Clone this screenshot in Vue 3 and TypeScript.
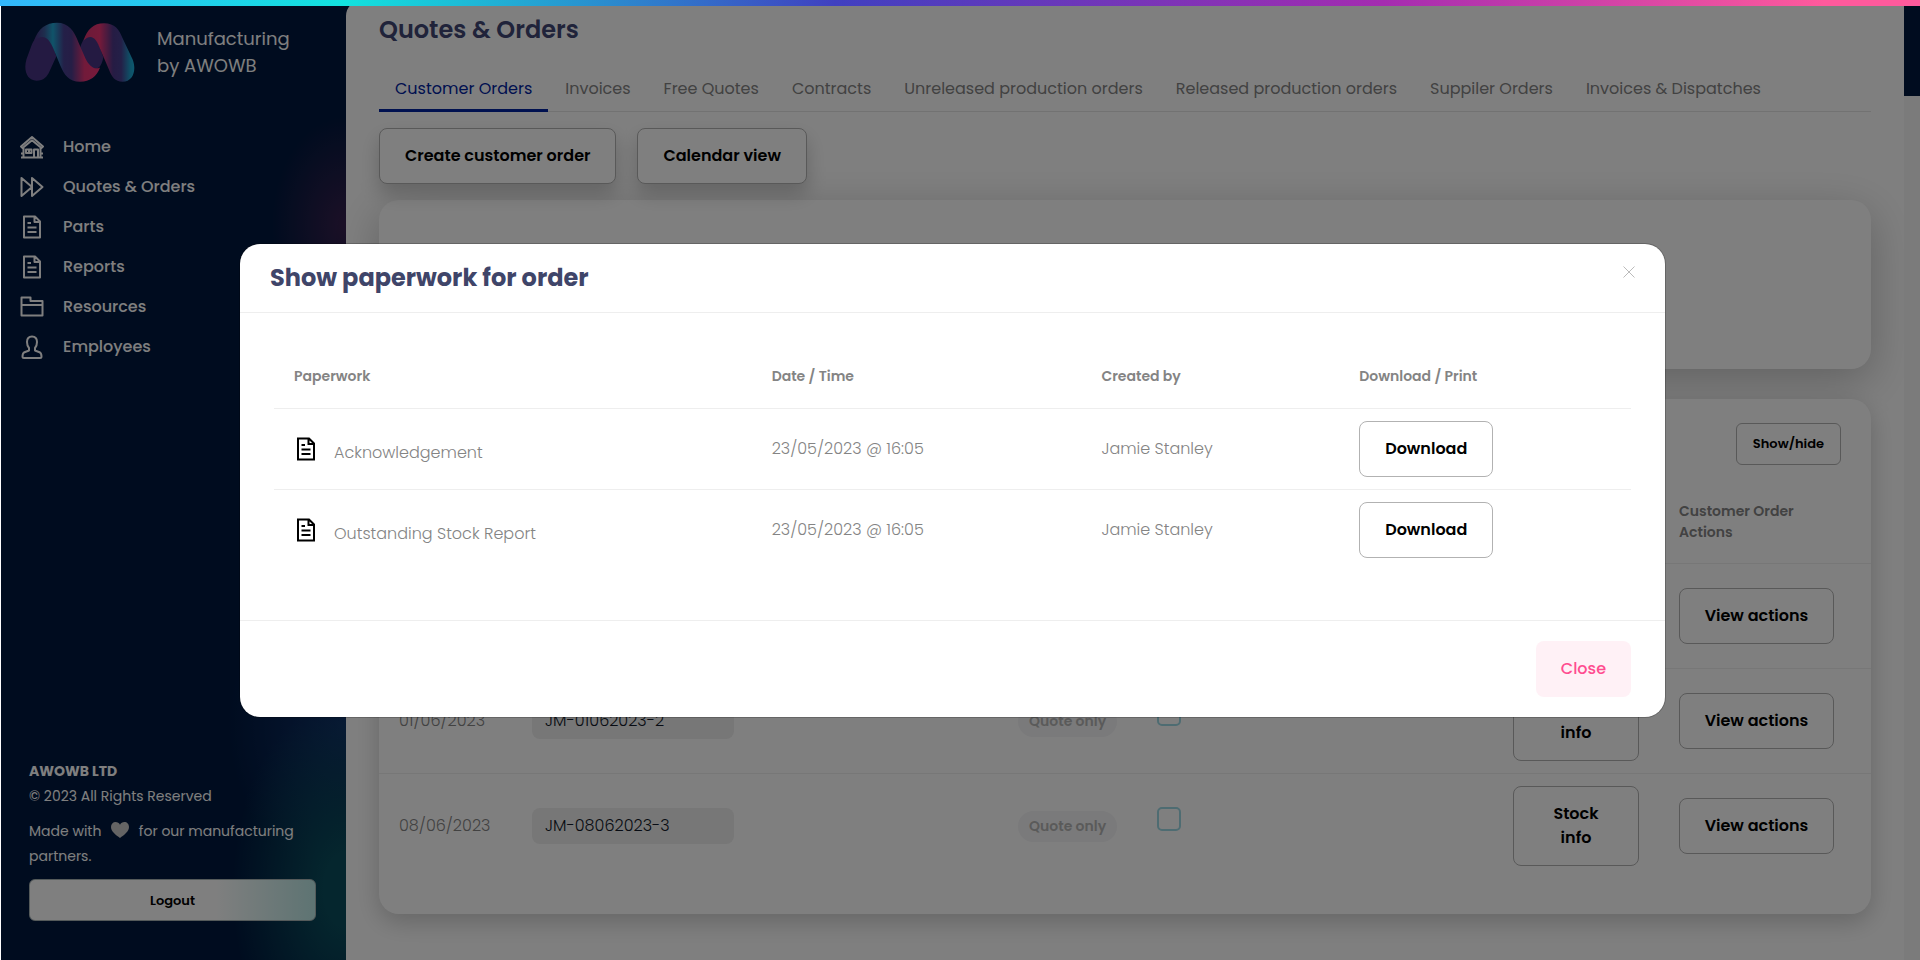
<script setup lang="ts">
import { ref } from 'vue'

type IconName = 'home' | 'forward' | 'document' | 'folder' | 'person'

interface NavItem { label: string; icon: IconName }
interface OrderRow { date: string; reference: string; status: string; actions: string }
interface Paperwork { name: string; created: string; author: string }

const navItems: NavItem[] = [
  { label: 'Home', icon: 'home' },
  { label: 'Quotes & Orders', icon: 'forward' },
  { label: 'Parts', icon: 'document' },
  { label: 'Reports', icon: 'document' },
  { label: 'Resources', icon: 'folder' },
  { label: 'Employees', icon: 'person' },
]

const iconPaths: Record<IconName, string> = {
  home: 'M1 11.5 12 2l11 9.5-1.6 1.6L12 5.2l-9.4 7.9zM3.5 13v9M20.500 13v9M1 18.500h3M20 18.500h3M1 22.500h22M6 14.500h5.500v3.500H6zM14 22v-7.500h4V22M9 14.500V18',
  forward: 'M1.500 3v18l10.500-9zM12 3v18l10.500-9z',
  document: 'M4 1.500h11l5 5v16H4zM14.500 2v5H20M7.500 8h3.500M7.500 12.500h9M7.500 17h9',
  folder: 'M1.500 20.500v-18h9v3.500h12v14.500zM1.500 10h21',
  person: 'M12 1.500c-3.600 0-5 2.300-5 5.500 0 2.300.8 4.600 2 6v2.500l-4.500 1.700c-1.500.7-2 2.300-2 4.300 0 1 .5 1.500 1.500 1.500h16c1 0 1.500-.5 1.500-1.500 0-2-.5-3.600-2-4.300L15 15.500V13c1.200-1.400 2-3.700 2-6 0-3.200-1.400-5.500-5-5.500z',
}

const tabs: string[] = [
  'Customer Orders', 'Invoices', 'Free Quotes', 'Contracts', 'Unreleased production orders',
  'Released production orders', 'Suppiler Orders', 'Invoices & Dispatches',
]
const activeTab = ref(tabs[0])

const orders: OrderRow[] = [
  { date: '', reference: '', status: '', actions: 'View actions' },
  { date: '01/06/2023', reference: 'JM-01062023-2', status: 'Quote only', actions: 'View actions' },
  { date: '08/06/2023', reference: 'JM-08062023-3', status: 'Quote only', actions: 'View actions' },
]

const paperwork: Paperwork[] = [
  { name: 'Acknowledgement', created: '23/05/2023 @ 16:05', author: 'Jamie Stanley' },
  { name: 'Outstanding Stock Report', created: '23/05/2023 @ 16:05', author: 'Jamie Stanley' },
]

const modalOpen = ref(true)
</script>

<template>
  <div class="app">
    <div class="rainbow"></div>

    <aside class="sidebar">
      <div class="brand">
        <svg class="logo" viewBox="74 66 331 181" aria-hidden="true">
          <defs>
            <linearGradient id="waveOne" gradientUnits="userSpaceOnUse" x1="105" y1="0" x2="300" y2="0">
              <stop offset="0" stop-color="#483484" />
              <stop offset=".14" stop-color="#3c5c9c" />
              <stop offset=".27" stop-color="#20a8d4" />
              <stop offset=".44" stop-color="#484090" />
              <stop offset=".56" stop-color="#4c3c8c" />
              <stop offset=".76" stop-color="#e43474" />
              <stop offset="1" stop-color="#f03478" />
            </linearGradient>
            <linearGradient id="waveTwo" gradientUnits="userSpaceOnUse" x1="250" y1="0" x2="404" y2="0">
              <stop offset="0" stop-color="#d83470" />
              <stop offset=".32" stop-color="#e83474" />
              <stop offset=".58" stop-color="#4c3888" />
              <stop offset=".74" stop-color="#484090" />
              <stop offset=".92" stop-color="#1ca4d0" />
              <stop offset="1" stop-color="#1cb4e0" />
            </linearGradient>
          </defs>
          <path fill="#483484" d="M128 107C110 107 100 120 94 135L78 178C68 212 80 243 108 243C130 243 140 232 148 214L168 170C160 140 150 107 128 107Z" />
          <path fill="#483484" d="M240 143C250 112 262 104 274 108C294 116 300 145 310 172C306 192 300 207 283 207C262 204 250 170 240 143Z" />
          <path fill="url(#waveOne)" d="M100 124C114 84 138 68 170 68C205 68 222 92 235 128L256 176C268 200 283 211 300 203C290 230 270 246 240 246C205 246 192 225 180 197L160 148C148 118 130 96 100 124Z" />
          <path fill="url(#waveTwo)" d="M250 122C262 88 280 70 312 70C345 70 358 90 368 115L398 178C411 210 400 246 368 246C345 246 335 230 328 212L300 147C290 118 275 98 250 122Z" />
        </svg>
        <p class="brand-name">Manufacturing<br />by AWOWB</p>
      </div>

      <nav class="nav">
        <a v-for="item in navItems" :key="item.label" class="nav-link" href="#">
          <svg class="nav-icon" viewBox="0 0 24 24" aria-hidden="true"><path :d="iconPaths[item.icon]" /></svg>
          <span>{{ item.label }}</span>
        </a>
      </nav>

      <footer class="side-footer">
        <strong>AWOWB LTD</strong>
        <p>© 2023 All Rights Reserved</p>
        <p class="made">
          Made with
          <svg class="heart" viewBox="0 0 18 16" aria-hidden="true"><path d="M9 16C5 13 0 9.500 0 5C0 2 2 0 4.600 0C6.500 0 8.200 1 9 2.800C9.800 1 11.500 0 13.400 0C16 0 18 2 18 5C18 9.500 13 13 9 16Z" /></svg>
          for our manufacturing<br />partners.
        </p>
        <button class="logout" type="button">Logout</button>
      </footer>
    </aside>

    <div class="content-wrap">
      <main class="content">
        <h1>Quotes &amp; Orders</h1>
        <div class="tabs" role="tablist">
          <button v-for="tab in tabs" :key="tab" class="tab" :class="{ active: tab === activeTab }" type="button" role="tab" :aria-selected="tab === activeTab" @click="activeTab = tab">{{ tab }}</button>
        </div>
        <div class="actions">
          <button class="btn raised" type="button">Create customer order</button>
          <button class="btn raised" type="button">Calendar view</button>
        </div>

        <section class="card summary"></section>

        <section class="card orders">
          <div class="toolbar"><button class="btn small" type="button">Show/hide</button></div>
          <table class="orders-table">
            <colgroup>
              <col class="c-date" /><col /><col class="c-status" /><col class="c-check" /><col class="c-stock" /><col class="c-actions" />
            </colgroup>
            <thead>
              <tr><th></th><th></th><th></th><th></th><th></th><th class="wrap" scope="col">Customer Order Actions</th></tr>
            </thead>
            <tbody>
              <tr v-for="(order, i) in orders" :key="i">
                <td>{{ order.date }}</td>
                <td><span v-if="order.reference" class="reference">{{ order.reference }}</span></td>
                <td><span v-if="order.status" class="pill">{{ order.status }}</span></td>
                <td><input v-if="order.reference" class="check" type="checkbox" :aria-label="order.reference" /></td>
                <td><button v-if="order.reference" class="btn block" type="button">Stock info</button></td>
                <td><button class="btn view" type="button">{{ order.actions }}</button></td>
              </tr>
            </tbody>
          </table>
        </section>
      </main>
    </div>
    <div class="scroll-track"><div class="scroll-thumb"></div></div>

    <div v-if="modalOpen" class="overlay">
      <section class="modal" role="dialog" aria-modal="true" aria-labelledby="modal-title">
        <header class="modal-head">
          <h2 id="modal-title">Show paperwork for order</h2>
          <button class="dismiss" type="button" aria-label="Dismiss" @click="modalOpen = false">
            <svg viewBox="0 0 12 12" aria-hidden="true"><path d="M.5.5l11 11M11.500.5l-11 11" /></svg>
          </button>
        </header>
        <div class="modal-body">
          <table class="paper-table">
            <colgroup><col class="p-name" /><col class="p-date" /><col class="p-author" /><col /></colgroup>
            <thead>
              <tr><th scope="col">Paperwork</th><th scope="col">Date / Time</th><th scope="col">Created by</th><th scope="col">Download / Print</th></tr>
            </thead>
            <tbody>
              <tr v-for="paper in paperwork" :key="paper.name">
                <td>
                  <div class="paper-name">
                    <svg viewBox="0 0 24 24" aria-hidden="true"><path :d="iconPaths.document" /></svg>
                    <span>{{ paper.name }}</span>
                  </div>
                </td>
                <td>{{ paper.created }}</td>
                <td>{{ paper.author }}</td>
                <td><button class="btn download" type="button">Download</button></td>
              </tr>
            </tbody>
          </table>
        </div>
        <footer class="modal-foot"><button class="close" type="button" @click="modalOpen = false">Close</button></footer>
      </section>
    </div>
  </div>
</template>

<style>
body { margin: 0; background: #fff; }
</style>

<style scoped>
* { box-sizing: border-box; }
.app {
  position: relative;
  display: flex;
  min-height: 100vh;
  padding-left: 1px;
  font-family: Poppins, Inter, "Noto Sans", sans-serif;
  font-size: 16px;
  line-height: 24px;
  color: #848484;
}
h1, h2, p { margin: 0; }
button { font: inherit; cursor: pointer; }
.rainbow {
  position: absolute;
  inset: 0 0 auto 0;
  z-index: 3;
  height: 6px;
  background: linear-gradient(90deg, #33b7fb 0%, #12e2de 18%, #4040c0 43.500%, #a42cb0 72%, #ff5a9c 95%);
}

.sidebar {
  display: flex;
  flex: 0 0 345px;
  flex-direction: column;
  padding: 22px 30px 39px 14px;
  color: #fff;
  background:
    radial-gradient(ellipse 75px 110px at 100% 225px, #38204e, transparent),
    radial-gradient(ellipse 115px 190px at 100% 890px, #0a4c5c 20%, transparent),
    radial-gradient(ellipse 120px 150px at 100% 725px, #103068, transparent),
    #00183e;
}
.brand { display: flex; align-items: center; gap: 22px; padding-left: 10px; }
.logo { width: 110px; height: 60px; }
.brand-name { font-size: 18px; line-height: 27px; }
.nav { display: flex; flex-direction: column; margin-top: 45px; }
.nav-link { display: flex; align-items: center; gap: 19px; height: 40px; padding-left: 5px; font-weight: 500; color: #fff; text-decoration: none; }
.nav-icon { width: 24px; height: 24px; fill: none; stroke: #fff; stroke-width: 2; stroke-linejoin: round; }
.side-footer { display: flex; flex-direction: column; margin-top: auto; padding-left: 14px; font-size: 14px; line-height: 25px; }
.side-footer strong { font-weight: 700; }
.made { margin-top: 10px; }
.heart { width: 18px; height: 16px; margin: 0 6px; vertical-align: -2px; fill: #c8c8c8; }
.logout {
  height: 42px;
  margin-top: 10px;
  border: 1px solid #a8b4b4;
  border-radius: 6px;
  font-size: 13px;
  font-weight: 600;
  color: #000;
  background: linear-gradient(90deg, #fff 65%, #bce8e6);
}

.content-wrap { flex: 1; min-width: 0; background: #00183e; }
.content { min-height: 100%; padding: 12px 33px 46px; border-top-left-radius: 16px; background: #fff; }
h1 { font-size: 24px; font-weight: 600; line-height: 36px; color: #404674; }
.tabs { display: flex; gap: 1px; margin-top: 17px; border-bottom: 1px solid #e4e4e4; }
.tab { height: 47px; margin-bottom: -1px; padding: 3px 16px 0; border: 0; border-bottom: 3px solid transparent; background: none; color: #848484; white-space: nowrap; }
.tab.active { color: #0022a0; border-color: #0022a0; }
.actions { display: flex; gap: 21px; margin-top: 16px; }
.btn { height: 56px; padding: 0 25px; border: 1px solid #b2b2b2; border-radius: 8px; background: #fff; color: #000; font-weight: 600; white-space: nowrap; }
.btn.raised { box-shadow: 0 10px 20px rgba(0, 0, 0, .2); }
.btn.small { height: 42px; padding: 0 16px; font-size: 13px; border-radius: 6px; }
.btn.block { display: block; width: 100%; height: 80px; white-space: normal; }
.btn.view { display: block; width: 155px; padding: 0; }
.btn.download { display: block; width: 134px; padding: 0; }
.card { border-radius: 20px; background: #fff; }
.summary { height: 169px; margin-top: 16px; box-shadow: 0 12px 45px rgba(0, 0, 0, .24); }
.orders { position: relative; margin-top: 30px; padding: 24px 0 36px; box-shadow: 0 8px 24px rgba(0, 0, 0, .2); }
.toolbar { display: flex; justify-content: flex-end; padding-right: 30px; }
table { width: 100%; border-collapse: separate; border-spacing: 0; table-layout: fixed; }
th, td { padding: 0 20px; text-align: left; border-bottom: 1px solid #eee; }
th { font-size: 14px; font-weight: 600; line-height: 21px; }
th.wrap { padding-right: 50px; }
td { font-weight: 300; }
tbody tr:last-child td { border-bottom: 0; }
.orders-table { margin-top: 15px; }
.orders-table th { height: 84px; }
.orders-table td { height: 105px; }
.orders-table tbody tr:last-child td { height: 104px; }
.c-date { width: 133px; }
.c-status { width: 139px; }
.c-check { width: 356px; }
.c-stock { width: 166px; }
.c-actions { width: 212px; }
.reference { display: block; width: 202px; padding: 6px 13px; border-radius: 8px; background: #eee; color: #101828; }
.pill { display: block; width: max-content; padding: 3px 11px; border-radius: 16px; background: #f4f4f6; color: #b4b4b4; font-size: 14px; line-height: 25px; font-weight: 600; white-space: nowrap; }
.check { display: block; appearance: none; width: 24px; height: 24px; margin: 0 0 14px; border: 2px solid #9cd8e4; border-radius: 5px; background: #fff; }

.scroll-track { flex: 0 0 16px; background: #f6f6f6; }
.scroll-thumb { height: 96px; background: #00183e; }

.overlay {
  position: absolute;
  inset: 0 0 0 1px;
  z-index: 2;
  display: flex;
  align-items: center;
  padding: 20px 255px 20px 239px;
  background: rgba(0, 0, 0, .5);
}
.modal { flex: 1; border-radius: 20px; background: #fff; box-shadow: 0 0 0 1px rgba(0, 0, 0, .2); }
.modal-head { display: flex; align-items: center; justify-content: space-between; height: 69px; padding: 0 30px; border-bottom: 1px solid #eee; }
h2 { font-size: 24px; line-height: 36px; font-weight: 700; color: #3f4569; }
.dismiss { align-self: flex-start; width: 12px; height: 12px; margin-top: 22px; padding: 0; border: 0; background: none; }
.dismiss svg { display: block; stroke: #bbb; stroke-width: 1; }
.modal-body { padding: 33px 34px 50px; }
.paper-table th { height: 63px; }
.paper-table td { height: 81px; }
.paper-table tbody tr:last-child td { height: 80px; }
.p-name { width: 35.200%; }
.p-date { width: 24.300%; }
.p-author { width: 19%; }
.paper-name { display: flex; align-items: center; gap: 16px; }
.paper-name svg { width: 24px; height: 24px; fill: none; stroke: #000; stroke-width: 2; }
.paper-name span { padding-top: 8px; }
.modal-foot { display: flex; justify-content: flex-end; padding: 20px 34px; border-top: 1px solid #eee; }
.close { height: 56px; padding: 0 25px; border: 0; border-radius: 8px; background: #fff1f6; color: #ff4d90; font-weight: 500; }
</style>
